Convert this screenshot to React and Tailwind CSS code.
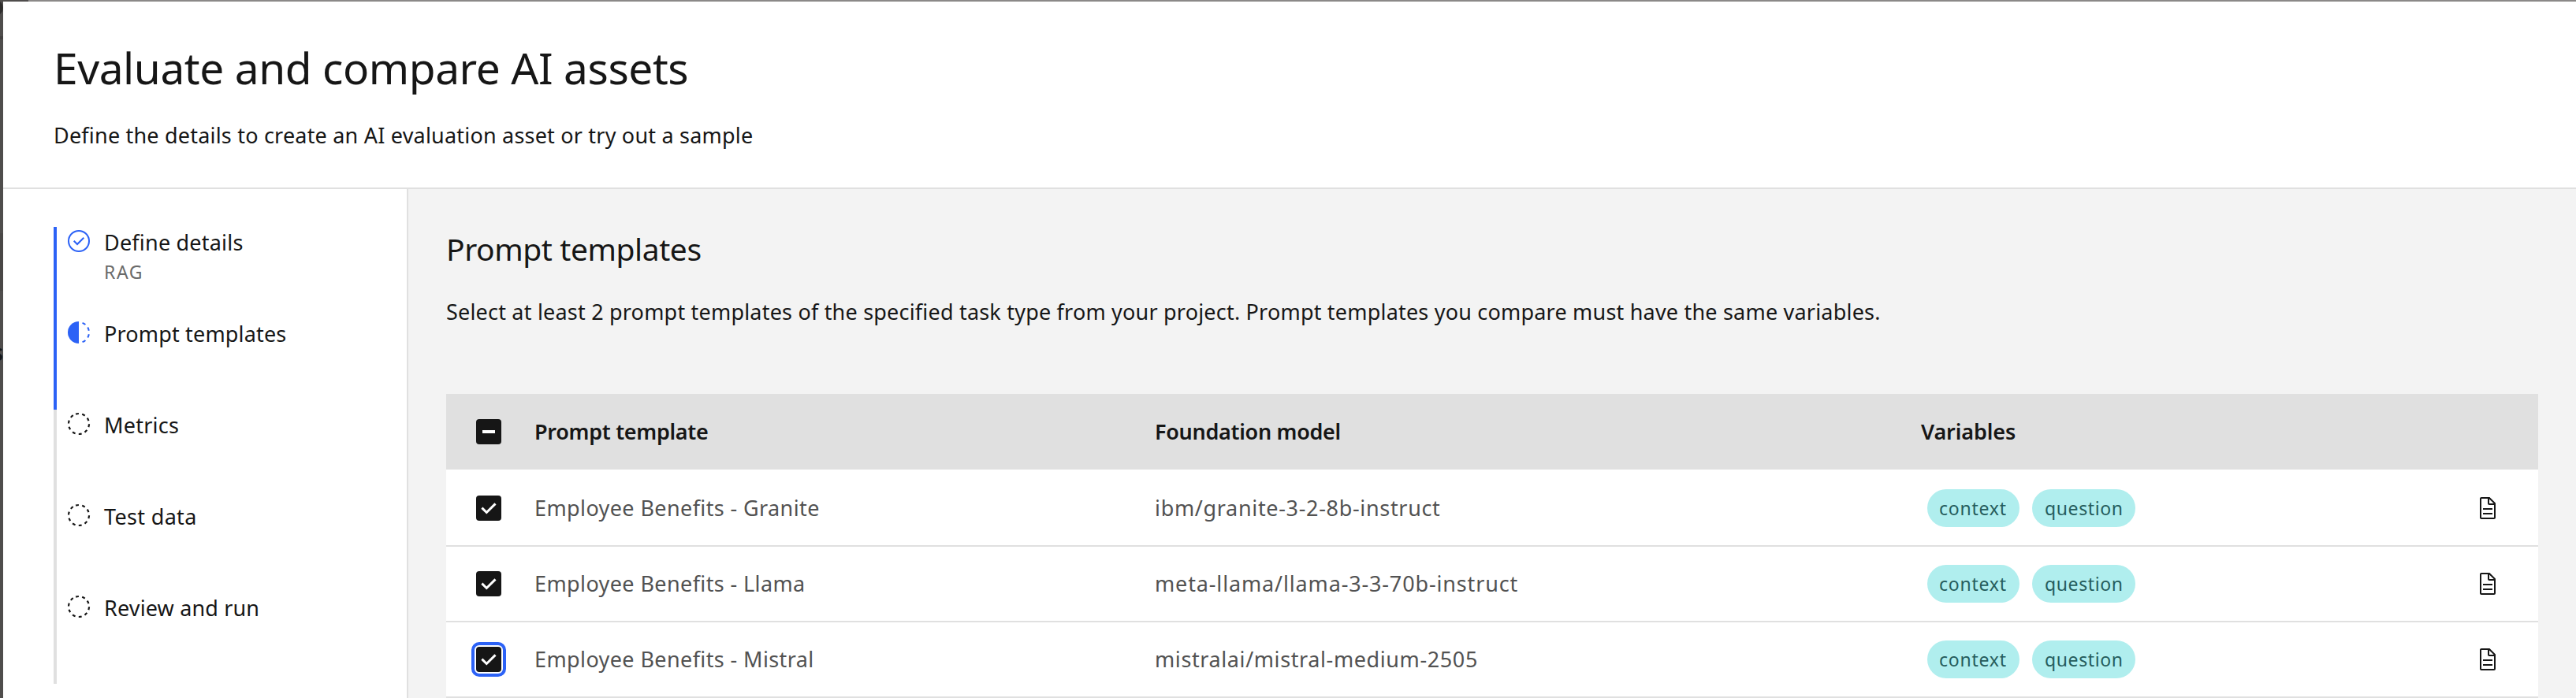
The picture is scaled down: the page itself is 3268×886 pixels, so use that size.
import React from "react";

const steps = [
  { label: "Define details", note: "RAG", state: "complete", track: "tracking-[0.2px]" },
  { label: "Prompt templates", state: "current", track: "tracking-[0.17px]" },
  { label: "Metrics", state: "todo", track: "tracking-[0.25px]" },
  { label: "Test data", state: "todo", track: "tracking-[0.33px]" },
  { label: "Review and run", state: "todo", track: "tracking-[0.15px]" },
];

const rows = [
  { name: "Employee Benefits - Granite", model: "ibm/granite-3-2-8b-instruct", track: "tracking-[0.67px]" },
  { name: "Employee Benefits - Llama", model: "meta-llama/llama-3-3-70b-instruct", track: "tracking-[0.85px]" },
  { name: "Employee Benefits - Mistral", model: "mistralai/mistral-medium-2505", track: "tracking-[0.6px]", focused: true },
];

function StepIcon({ state }) {
  if (state === "complete") {
    return (
      <svg viewBox="0 0 32 32" className="mt-[2px] h-8 w-8 shrink-0 fill-[#2c62f6]">
        <path d="M14 21.414L9 16.413 10.413 15 14 18.586 21.585 11 23 12.415 14 21.414z" />
        <path d="M16,2A14,14,0,1,0,30,16,14,14,0,0,0,16,2Zm0,26A12,12,0,1,1,28,16,12,12,0,0,1,16,28Z" />
      </svg>
    );
  }
  if (state === "current") {
    return (
      <svg viewBox="0 0 32 32" className="mt-[2px] h-8 w-8 shrink-0 fill-[#2c62f6]">
        <path d="M23.7642,6.8593l1.2851-1.5315A13.976,13.976,0,0,0,20.8672,2.887l-.6836,1.8776A11.9729,11.9729,0,0,1,23.7642,6.8593Z" />
        <path d="M27.8103,14l1.9677-.4128A13.8888,13.8888,0,0,0,28.14,9.0457L26.4087,10A12.52,12.52,0,0,1,27.8103,14Z" />
        <path d="M20.1836,27.2354l.6836,1.8776a13.976,13.976,0,0,0,4.1821-2.4408l-1.2851-1.5315A11.9729,11.9729,0,0,1,20.1836,27.2354Z" />
        <path d="M26.4087,22,28.14,23a14.14,14.14,0,0,0,1.6382-4.5872L27.8103,18.0659A12.1519,12.1519,0,0,1,26.4087,22Z" />
        <path d="M16,30V2a14,14,0,0,0,0,28Z" />
      </svg>
    );
  }
  return (
    <svg viewBox="0 0 32 32" className="mt-[2px] h-8 w-8 shrink-0">
      <circle cx="16" cy="16" r="13" fill="none" stroke="#161616" strokeWidth="2.2" strokeDasharray="3.9 4.268" transform="rotate(-107.4 16 16)" />
    </svg>
  );
}

function Step({ step }) {
  const done = step.state !== "todo";
  return (
    <li className={"flex h-[116px] border-l-4 pl-3 " + (done ? "border-[#2c62f6]" : "border-[#e0e0e0]")}>
      <StepIcon state={step.state} />
      <div className="ml-4 pt-[2px]">
        <div className={"text-[27px] leading-9 " + step.track}>{step.label}</div>
        {step.note && <div className="mt-[3px] text-[23px] leading-8 tracking-[1.6px] text-[#6a6a6a]">{step.note}</div>}
      </div>
    </li>
  );
}

function Checkbox({ mixed, focused }) {
  return (
    <span className={"block h-8 w-8 rounded-[4px] bg-[#161616] " + (focused ? "outline-4 outline-offset-2 outline-[#2c62f6]" : "")}>
      <svg viewBox="0 0 32 32" className="h-8 w-8">
        {mixed ? (
          <rect x="8" y="14" width="16" height="4" fill="#fff" />
        ) : (
          <path d="M7.4 15.6 13.3 21.5 24.5 10.4" fill="none" stroke="#fff" strokeWidth="3" />
        )}
      </svg>
    </span>
  );
}

function DocumentIcon() {
  return (
    <svg viewBox="0 0 32 32" className="h-8 w-8 fill-[#161616]">
      <path d="M25.7,9.3l-7-7C18.5,2.1,18.3,2,18,2H8C6.9,2,6,2.9,6,4v24c0,1.1,0.9,2,2,2h16c1.1,0,2-0.9,2-2V10C26,9.7,25.9,9.5,25.7,9.3z M18,4.4l5.6,5.6H18V4.4z M24,28H8V4h8v6c0,1.1,0.9,2,2,2h6V28z" />
      <rect x="10" y="22" width="12" height="2" />
      <rect x="10" y="16" width="12" height="2" />
    </svg>
  );
}

const columns = "grid grid-cols-[112px_787px_972px_703px_80px] items-center";

export default function App() {
  return (
    <div className="flex h-[886px] w-[3268px] overflow-hidden bg-white font-['Noto_Sans','Open_Sans',sans-serif] text-[#161616]">
      <div className="relative w-1 shrink-0 overflow-hidden bg-[#4f4d4c]">
        <div className="absolute -left-3 top-0 h-5 w-4 rounded-r-full border-r-4 border-[#2e2d2c]" />
        <div className="absolute left-0 top-[46px] h-1 w-1 bg-[#434140]" />
        <div className="absolute left-0 top-[296px] h-[73px] w-1 bg-[#494746]" />
        <div className="absolute right-0 top-[429px] text-[28px] font-semibold leading-[36px] text-[#161616]">s</div>
      </div>
      <div className="flex min-w-0 flex-1 flex-col">
        <div className="flex h-[2px] shrink-0 bg-[#8b8988]">
          <div className="w-8 bg-[#4f4d4c]" />
        </div>
        <header className="h-[238px] shrink-0 border-b-2 border-[#e0e0e0] pl-16 pt-12">
          <h1 className="text-[55px] leading-[72px] tracking-[-0.43px]">Evaluate and compare AI assets</h1>
          <p className="mt-[30px] text-[27px] leading-10 tracking-[0.2px]">
            Define the details to create an AI evaluation asset or try out a sample
          </p>
        </header>
        <div className="flex min-h-0 flex-1">
          <nav className="w-[514px] shrink-0 border-r-2 border-[#e0e0e0] pl-16 pt-12">
            <ul>
              {steps.map((s) => (
                <Step key={s.label} step={s} />
              ))}
            </ul>
          </nav>
          <main className="min-w-0 flex-1 bg-[#f3f3f3] pl-12 pr-12 pt-12">
            <h2 className="text-[39px] leading-[56px] tracking-[-0.42px]">Prompt templates</h2>
            <p className="mt-8 text-[27px] leading-10 tracking-[0.2px]">
              Select at least 2 prompt templates of the specified task type from your project. Prompt templates you compare must have the same variables.
            </p>
            <div className="mt-[84px] w-[2654px] text-[27px] leading-10">
              <div className={columns + " h-24 bg-[#e0e0e0] font-semibold"}>
                <div className="pl-[38px]">
                  <Checkbox mixed />
                </div>
                <div className="tracking-[-0.3px]">Prompt template</div>
                <div className="tracking-[-0.3px]">Foundation model</div>
                <div className="tracking-[-0.1px]">Variables</div>
              </div>
              <div className="bg-white pt-[2px]">
                {rows.map((r) => (
                  <div key={r.name} className={columns + " h-24 border-b-2 border-[#e0e0e0] text-[#525252]"}>
                    <div className="pl-[38px]">
                      <Checkbox focused={r.focused} />
                    </div>
                    <div className="tracking-[0.39px]">{r.name}</div>
                    <div className={r.track}>{r.model}</div>
                    <div className="flex gap-4 pl-2 text-[23px] leading-[48px] text-[#265d5d]">
                      <span className="h-12 w-[117px] rounded-full bg-[#b0eeee] pl-[15px] tracking-[0.76px]">context</span>
                      <span className="h-12 w-[131px] rounded-full bg-[#b0eeee] pl-4 tracking-[0.6px]">question</span>
                    </div>
                    <DocumentIcon />
                  </div>
                ))}
              </div>
            </div>
          </main>
        </div>
      </div>
    </div>
  );
}
